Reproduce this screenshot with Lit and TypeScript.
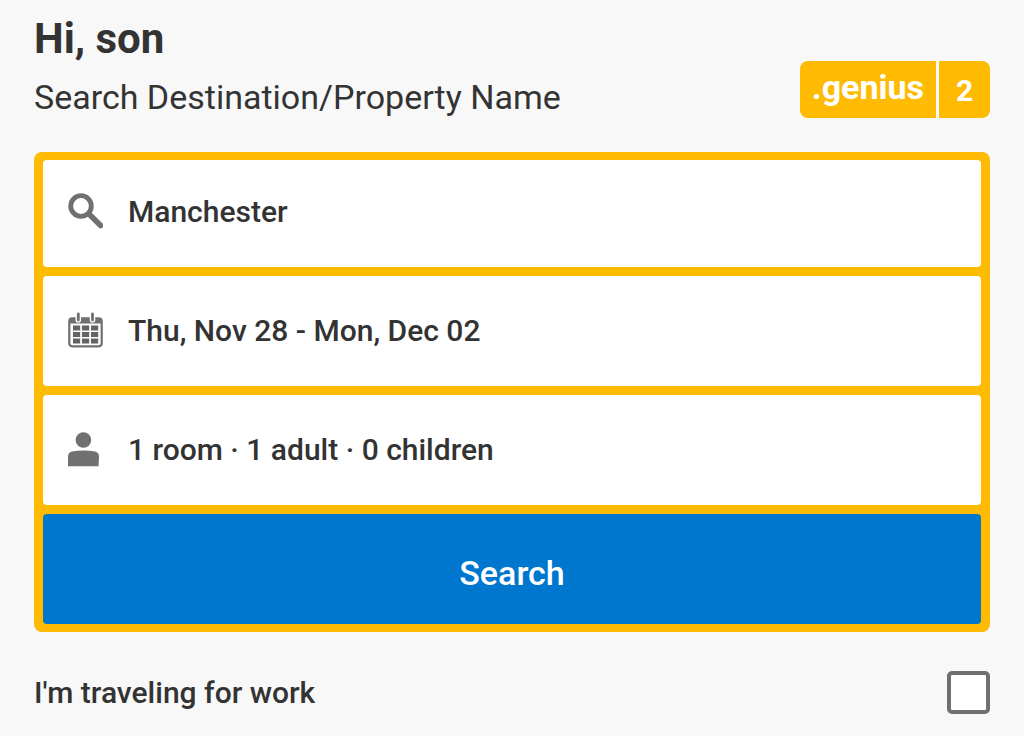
import { LitElement, html, css, svg } from "lit";
import { customElement, state } from "lit/decorators.js";

const searchIcon = svg`<circle cx="14" cy="13" r="10.3" fill="none" stroke="#707070" stroke-width="4.8"/><path d="M22 21L33.6 32.600" stroke="#707070" stroke-width="5.600" stroke-linecap="round"/>`;
const calendarIcon = svg`<rect x="2.3" y="6.3" width="32.4" height="28" rx="3" fill="#fff" stroke="#707070" stroke-width="2.2"/><path d="M2 11.500V8.500q0-2.500 2.500-2.500h28q2.500 0 2.500 2.500V11.500z" fill="#707070"/><path d="M11.300 2v6M25.500 2v6" stroke="#fff" stroke-width="5.500" stroke-linecap="round"/><path d="M11.300 2v6M25.500 2v6" stroke="#707070" stroke-width="2.800" stroke-linecap="round"/><path d="M6 13.500h7.200v5H6zM15 13.500h7.200v5h-7.200zM24 13.500h7.200v5h-7.200zM6 20h7.200v5H6zM15 20h7.200v5h-7.200zM24 20h7.200v5h-7.200zM6 26.500h7.200v5H6zM15 26.500h7.200v5h-7.200zM24 26.500h7.200v5h-7.200z" fill="#646464"/>`;
const personIcon = svg`<circle cx="16.400" cy="9" r="7.800" fill="#707070"/><path d="M1 35.300V25.500Q1 21.500 5 20.500Q16.500 18.500 28 20.500Q32 21.500 32 25.500L31.500 35.300z" fill="#707070"/>`;

@customElement("app-root")
export class AppRoot extends LitElement {
  @state() private work = false;

  static styles = css`
    :host { display: block; min-height: 100vh; background: #f8f8f8; color: #333; font-family: Roboto, "Liberation Sans", sans-serif; }
    * { box-sizing: border-box; }
    main { padding: 13px 34px 20px; }
    header { display: flex; justify-content: space-between; align-items: flex-end; }
    h1 { margin: 0; font-size: 42px; line-height: 52px; font-weight: 700; }
    .lead { margin: 0; font-size: 34px; line-height: 64px; font-weight: 400; }
    .badge { display: flex; gap: 3px; height: 57px; margin-bottom: 11px; color: #fff; font-weight: 700; }
    .genius { display: flex; align-items: center; padding: 0 12px 6px; background: #febb02; border-radius: 8px 0 0 8px; font-size: 34px; }
    .level { display: flex; align-items: center; justify-content: center; width: 51px; padding-top: 2px; background: #febb02; border-radius: 0 8px 8px 0; font-size: 30px; }
    form { display: flex; flex-direction: column; gap: 9px; margin-top: 23px; padding: 8px 9px; background: #febb02; border-radius: 8px; }
    .field { display: flex; align-items: center; gap: 25px; height: 110px; padding: 0 24px; background: #fff; border: 0; border-radius: 4px; color: #333; font: 500 30px/40px Roboto, sans-serif; text-align: left; }
    .place { height: 107px; padding-bottom: 4px; }
    .icon { width: 36px; height: 36px; flex: none; margin-bottom: 2px; }
    .field input { flex: 1; min-width: 0; padding: 0; border: 0; outline: 0; color: inherit; font: inherit; background: none; }
    .search { height: 110px; padding: 8px 0 0; border: 0; border-radius: 4px; background: #0077cf; color: #fff; font: 500 34px/44px Roboto, sans-serif; }
    .work { display: flex; align-items: center; justify-content: space-between; margin-top: 39px; font-size: 30px; line-height: 40px; font-weight: 500; }
    .check { appearance: none; width: 43px; height: 43px; margin: 0; background: #fff; border: 4px solid #707070; border-radius: 5px; }
    .check:checked { background: #0077cf; }
  `;

  private icon(shape: unknown) {
    return html`<svg class="icon" viewBox="0 0 36 36" aria-hidden="true">${shape}</svg>`;
  }

  render() {
    return html`<main>
      <header>
        <div><h1>Hi, son</h1><p class="lead">Search Destination/Property Name</p></div>
        <div class="badge"><span class="genius">.genius</span><span class="level">2</span></div>
      </header>
      <form @submit=${(e: Event) => e.preventDefault()}>
        <label class="field place">${this.icon(searchIcon)}<input type="text" aria-label="Destination" value="Manchester"></label>
        <button class="field" type="button">${this.icon(calendarIcon)}<span>Thu, Nov 28 - Mon, Dec 02</span></button>
        <button class="field" type="button">${this.icon(personIcon)}<span>1 room · 1 adult · 0 children</span></button>
        <button class="search" type="submit">Search</button>
      </form>
      <label class="work"><span>I'm traveling for work</span><input class="check" type="checkbox" .checked=${this.work} @change=${(e: Event) => (this.work = (e.target as HTMLInputElement).checked)}></label>
    </main>`;
  }
}
